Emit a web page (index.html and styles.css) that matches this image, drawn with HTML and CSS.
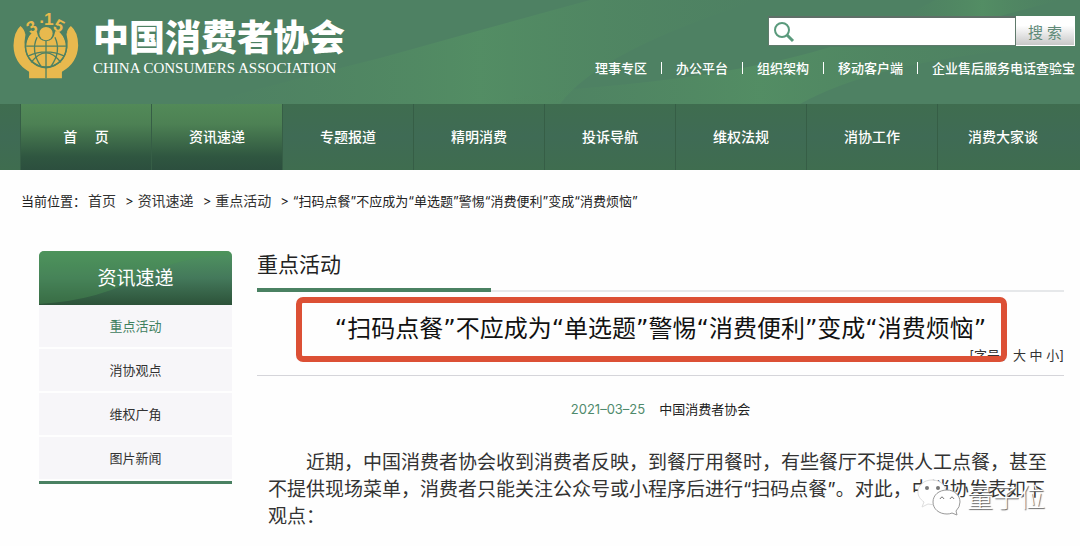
FILE: index.html
```html
<!DOCTYPE html>
<html lang="zh-CN">
<head>
    <meta charset="UTF-8">
    <meta name="viewport" content="width=device-width, initial-scale=1">
    <title>中国消费者协会</title>
    <link rel="stylesheet" href="styles.css">
</head>
<body>
    <header class="header">
        <svg class="header-bg" viewBox="0 0 1080 104" preserveAspectRatio="none" aria-hidden="true">
            <defs>
                <linearGradient id="wave" x1="0" x2="1" y1="0" y2="0">
                    <stop offset="0" stop-color="#50875f" stop-opacity="0"/>
                    <stop offset="0.5" stop-color="#549064" stop-opacity="0.8"/>
                    <stop offset="1" stop-color="#50875f" stop-opacity="0"/>
                </linearGradient>
            </defs>
            <path d="M200 104 Q300 78 380 58 Q480 30 590 0 L760 0 Q600 50 560 104Z" fill="url(#wave)"/>
            <path d="M560 90 Q730 78 830 47 L1040 48 Q880 60 800 104 L480 104Z" fill="url(#wave)"/>
            <path d="M905 16 L935 0 H1060 L1000 16Z" fill="url(#wave)"/>
        </svg>
        <a class="logo" href="#">
            <svg class="logo-icon" viewBox="40 36 198 202" aria-hidden="true">
                <path d="M62 78 Q42 96 41 137 Q42 190 88 216 V236 H187 V216 Q234 190 236 137 Q236 96 214 78 Q202 88 201 104 Q212 145 190 180 Q168 205 139 206 Q108 205 88 180 Q68 150 77 104 Q74 88 62 78Z" fill="#e8b94e"/>
                <circle cx="139" cy="140" r="60" fill="#e8b94e"/>
                <g fill="none" stroke="#4e8163" stroke-width="4">
                    <path d="M139 122 V236 M79 139 H200 M86 168 Q139 144 193 168"/>
                    <path d="M112 112 Q92 155 124 200 M166 112 Q186 155 154 200"/>
                    <path d="M94 188 Q139 130 184 188"/>
                    <circle cx="139" cy="140" r="62"/>
                </g>
                <path d="M74 100 Q105 72 139 72 Q174 72 205 100 Q186 92 167 94 Q162 124 139 124 Q116 124 111 94 Q92 92 74 100Z" fill="#4e8163"/>
                <circle cx="139" cy="101" r="20" fill="#e8b94e"/>
                <g class="logo-num">
                    <text x="80" y="98" transform="rotate(-28 97 78)">3</text>
                    <text x="119" y="80">·</text>
                    <text x="133" y="76">1</text>
                    <text x="165" y="96" transform="rotate(28 180 76)">5</text>
                </g>
            </svg>
            <span class="logo-text">
                <span class="logo-cn">中国消费者协会</span>
                <span class="logo-en">CHINA CONSUMERS ASSOCIATION</span>
            </span>
        </a>
        <div class="header-right">
            <form class="search">
                <label class="search-box">
                    <svg width="22" height="22" viewBox="0 0 22 22" fill="none" stroke="#5a9a7c" stroke-width="2" aria-hidden="true">
                        <circle cx="9" cy="9" r="7"/>
                        <path d="M14 14 L20 20" stroke-width="3"/>
                    </svg>
                    <input type="text" name="keyword" aria-label="搜索">
                </label>
                <button type="button">搜 索</button>
            </form>
            <nav class="top-links">
                <a href="#">理事专区</a><i></i>
                <a href="#">办公平台</a><i></i>
                <a href="#">组织架构</a><i></i>
                <a href="#">移动客户端</a><i></i>
                <a href="#">企业售后服务电话查验宝</a>
            </nav>
        </div>
    </header>

    <nav class="nav">
        <a class="active" href="#">首&emsp;&nbsp;页</a>
        <a class="active" href="#">资讯速递</a>
        <a href="#">专题报道</a>
        <a href="#">精明消费</a>
        <a href="#">投诉导航</a>
        <a href="#">维权法规</a>
        <a href="#">消协工作</a>
        <a href="#">消费大家谈</a>
    </nav>

    <div class="crumbs">
        <span>当前位置：</span>
        <a href="#">首页</a><span class="sep">&gt;</span>
        <a href="#">资讯速递</a><span class="sep">&gt;</span>
        <a href="#">重点活动</a><span class="sep">&gt;</span>
        <span>“扫码点餐”不应成为“单选题”警惕“消费便利”变成“消费烦恼”</span>
    </div>

    <div class="content">
        <aside class="sidebar">
            <h2>
                <svg viewBox="0 0 193 54" preserveAspectRatio="none" aria-hidden="true">
                    <path d="M0 0 H193 V4 Q150 4 110 22 Q60 50 0 53Z" fill="#4c9455" fill-opacity="0.4"/>
                </svg>
                <span>资讯速递</span>
            </h2>
            <ul>
                <li><a class="current" href="#">重点活动</a></li>
                <li><a href="#">消协观点</a></li>
                <li><a href="#">维权广角</a></li>
                <li><a href="#">图片新闻</a></li>
            </ul>
        </aside>

        <main class="main">
            <h2 class="column-title">重点活动</h2>
            <div class="article-head">
                <h1>“扫码点餐”不应成为“单选题”警惕“消费便利”变成“消费烦恼”</h1>
                <div class="font-size">[字号：<a href="#">大</a> <a href="#">中</a> <a href="#">小</a>]</div>
                <div class="mark"></div>
            </div>
            <div class="meta">
                <time>2021–03–25</time>
                <span>中国消费者协会</span>
            </div>
            <div class="article">
                <p>近期，中国消费者协会收到消费者反映，到餐厅用餐时，有些餐厅不提供人工点餐，甚至不提供现场菜单，消费者只能关注公众号或小程序后进行“扫码点餐”。对此，中消协发表如下观点：</p>
                <div class="watermark">
                    <svg width="44" height="38" viewBox="0 0 44 38" aria-hidden="true">
                        <g fill="#fff" stroke="#999" stroke-width="1">
                            <path d="M15 1 C7 1 1 6 1 13 C1 17 3 20 7 23 L5 28 L11 25 Q20 27 24 23 Q30 19 29 12 C28 5 22 1 15 1Z" stroke="#ddd"/>
                            <path d="M30 11 C22 11 16 16 16 23 C16 30 22 35 30 35 Q33 35 35 34 L40 36 L39 32 Q43 28 43 23 C43 16 37 11 30 11Z"/>
                        </g>
                        <g fill="#777">
                            <circle cx="10" cy="9" r="2"/>
                            <circle cx="21" cy="9" r="2"/>
                        </g>
                        <path d="M23 20 Q25 16 27 20 M33 20 Q35 16 37 20" fill="none" stroke="#777"/>
                    </svg>
                    <span>量子位</span>
                </div>
            </div>
        </main>
    </div>
</body>
</html>
```
FILE: styles.css
```css
* {
    box-sizing: border-box;
}
body {
    margin: 0;
    font-family: Inter, "Noto Sans CJK SC", sans-serif;
    font-size: 13px;
    color: #222;
    background-color: #fefefe;
}
a {
    color: inherit;
    text-decoration: none;
}
h1, h2, p, ul {
    margin: 0;
    padding: 0;
    font-weight: 400;
}

/* 页头 */
.header {
    position: relative;
    display: flex;
    justify-content: space-between;
    min-height: 104px;
    padding: 12px 5px 0 13px;
    background-color: #4e8163;
    color: #fff;
}
.header-bg {
    position: absolute;
    top: 0;
    left: 0;
    width: 100%;
    height: 100%;
}
.logo {
    position: relative;
    display: flex;
    align-items: flex-start;
    gap: 14px;
}
.logo-icon {
    width: 66px;
    height: 67px;
    overflow: visible;
}
.logo-num {
    fill: #e8b94e;
    font-family: "Liberation Sans", sans-serif;
    font-size: 52px;
    font-weight: 700;
}
.logo-text {
    display: flex;
    flex-direction: column;
    padding-top: 6px;
}
.logo-cn {
    font-size: 36px;
    font-weight: 900;
    line-height: 40px;
}
.logo-en {
    font-family: "Liberation Serif", serif;
    font-size: 15px;
    line-height: 20px;
}
.header-right {
    position: relative;
    display: flex;
    flex-direction: column;
    align-items: flex-end;
    gap: 12px;
    padding-top: 4px;
}
.search {
    display: flex;
    width: 307px;
    height: 30px;
}
.search-box {
    display: flex;
    flex: 1;
    align-items: center;
    padding-left: 4px;
    background-color: #fff;
    border: 1px solid #5f7a6b;
    border-top: 2px solid #5f6f68;
}
.search input {
    flex: 1;
    min-width: 0;
    border: none;
    outline: none;
    background: none;
}
.search button {
    width: 59px;
    padding: 0;
    border: 1px solid #fff;
    border-left: none;
    background: linear-gradient(#fff 30%, #c8c8c8);
    color: #5f8a78;
    font-family: inherit;
    font-size: 15px;
}
.top-links {
    display: flex;
    align-items: center;
    gap: 14px;
    font-weight: 500;
    line-height: 20px;
}
.top-links i {
    width: 1px;
    height: 12px;
    background-color: #fff;
}

/* 主导航 */
.nav {
    display: flex;
    padding: 0 12px 0 20px;
    background: linear-gradient(#3f6d4f, #3f6b55 50%, #3f6d4f);
}
.nav a {
    flex: 1;
    border-left: 1px solid #365e46;
    color: #fff;
    font-size: 14px;
    font-weight: 500;
    line-height: 66px;
    text-align: center;
}
.nav .active {
    background: linear-gradient(#528a58, #4d8154 30%, #2f5640 80%, #2c4f3e);
}

.crumbs {
    display: flex;
    align-items: center;
    padding: 20px 21px 0;
    line-height: 22px;
}
.crumbs a {
    font-size: 14px;
    color: #333;
}
.crumbs span:first-child {
    margin-right: 2px;
}
.crumbs .sep {
    margin: 0 4px 0 9px;
}

.content {
    display: flex;
    gap: 25px;
    padding: 39px 16px 20px 39px;
}

/* 左侧栏 */
.sidebar {
    flex: 0 0 193px;
}
.sidebar h2 {
    position: relative;
    overflow: hidden;
    padding-top: 2px;
    border-radius: 5px 5px 0 0;
    background: linear-gradient(#4f9460, #44795b 50%, #2c5239);
    color: #fff;
    font-size: 19px;
    line-height: 52px;
    text-align: center;
}
.sidebar h2 svg {
    position: absolute;
    top: 0;
    left: 0;
    width: 100%;
    height: 100%;
}
.sidebar h2 span {
    position: relative;
}
.sidebar ul {
    list-style: none;
    border-bottom: 3px solid #4a8162;
}
.sidebar li {
    padding-bottom: 2px;
}
.sidebar li a {
    display: block;
    background-color: #f7f6f9;
    color: #333;
    line-height: 42px;
    text-align: center;
}
.sidebar li .current {
    color: #3f805f;
}

/* 正文 */
.main {
    flex: 1;
    min-width: 0;
}
.column-title {
    border-bottom: 2px solid #e6e8ea;
    font-size: 21px;
    line-height: 28px;
}
.column-title::after {
    content: "";
    display: block;
    width: 29%;
    height: 4px;
    margin: 9px 0 -2px;
    background-color: #4a8162;
}
.article-head {
    position: relative;
    padding: 20px 0 11px;
    border-bottom: 1px solid #d5d5da;
}
.article-head h1 {
    color: #111;
    font-family: "DejaVu Sans", "Noto Sans CJK SC", sans-serif;
    font-size: 24px;
    line-height: 34px;
    text-align: center;
}
.font-size {
    line-height: 18px;
    text-align: right;
    color: #333;
}
.mark {
    position: absolute;
    top: 5px;
    left: 39px;
    right: 57px;
    height: 65px;
    border: 6px solid #dc5035;
    border-radius: 7px;
}
.meta {
    display: flex;
    justify-content: center;
    gap: 14px;
    padding: 23px 0 30px;
    line-height: 20px;
}
.meta time {
    color: #4f8a6c;
}
.article {
    position: relative;
    padding: 0 16px 0 11px;
    color: #333;
    font-size: 19px;
    line-height: 27px;
}
.article p {
    text-indent: 2em;
}
/* 公众号水印，叠在正文右下角 */
.watermark {
    position: absolute;
    top: 30px;
    right: 19px;
    display: flex;
    align-items: center;
    gap: 6px;
    color: #fff;
    font-size: 26px;
    font-weight: 300;
    line-height: 38px;
    text-shadow: 1px 1px 1px #666;
}
```
